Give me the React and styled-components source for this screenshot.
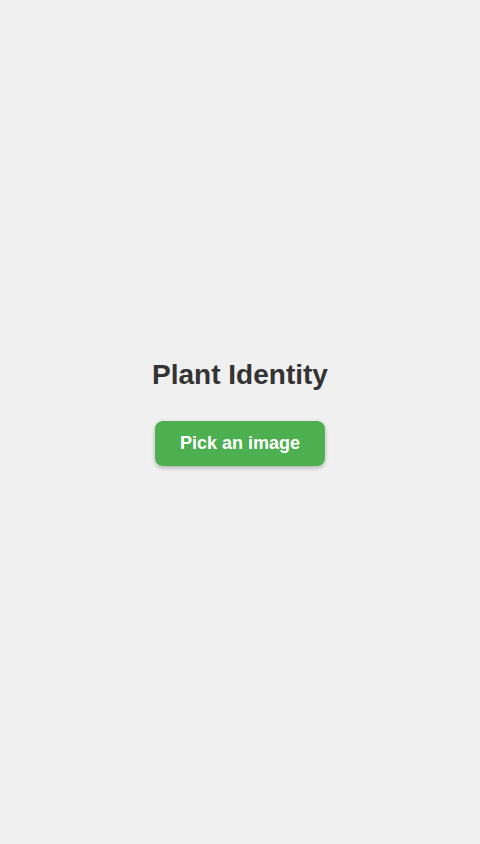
import React from "react";
import styled, { createGlobalStyle } from "styled-components";

const GlobalStyle = createGlobalStyle`
  html, body {
    margin: 0;
    padding: 0;
    background: #f0f0f0;
    font-family: "Liberation Sans", Arial, sans-serif;
  }
`;

const Container = styled.div`
  min-height: 100vh;
  display: flex;
  flex-direction: column;
  align-items: center;
  justify-content: center;
  background: #f0f0f0;
`;

const Title = styled.h1`
  font-size: 28px;
  line-height: 32px;
  font-weight: bold;
  color: #333;
  padding-top: 2px;
  margin: 0 0 30px;
`;

const Button = styled.button`
  border: none;
  height: 45px;
  padding: 0 25px;
  margin-bottom: 21px;
  background-color: #4caf50;
  color: white;
  font-family: "Liberation Sans", Arial, sans-serif;
  font-size: 18px;
  font-weight: bold;
  border-radius: 8px;
  box-shadow: 0 2px 4px rgba(0, 0, 0, 0.25);
  cursor: pointer;
`;

const App = () => {
  return (
    <>
      <GlobalStyle />
      <Container>
        <Title>Plant Identity</Title>
        <Button>Pick an image</Button>
      </Container>
    </>
  );
};

export default App;
